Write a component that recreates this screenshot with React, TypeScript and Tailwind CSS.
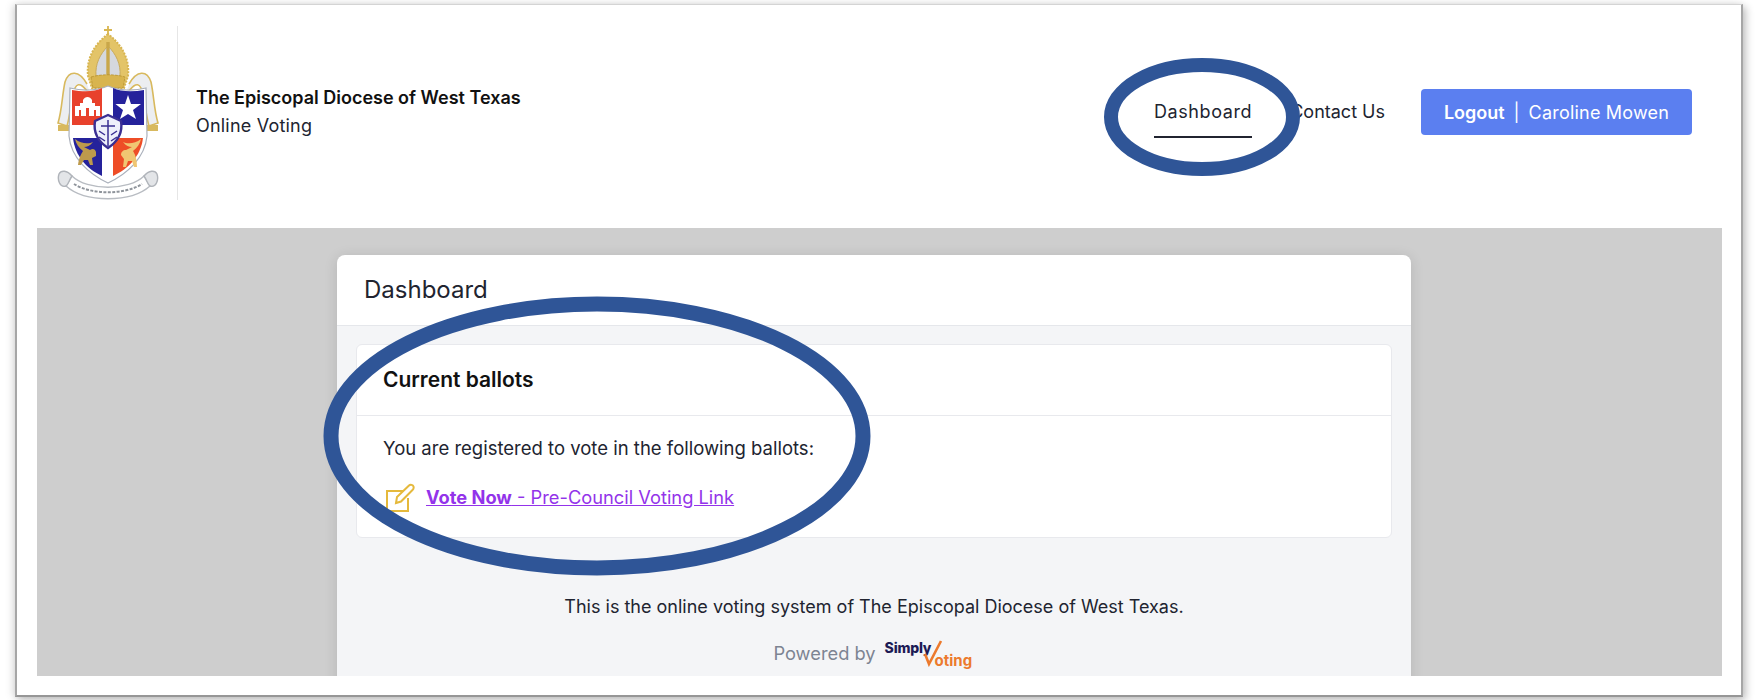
function Crest() {
  return (
    <svg width="102" height="174" viewBox="0 0 102 174" className="block">
      {/* lappets */}
      <path d="M30 58 C22 44 12 44 8 56 C5 70 5 84 1 97 L10 100 C13 90 14 74 18 62 C22 54 28 62 34 70" fill="#eceef1" stroke="#d8b95e" strokeWidth="1.6" />
      <path d="M72 58 C80 44 90 44 94 56 C97 70 97 84 101 97 L92 100 C89 90 88 74 84 62 C80 54 74 62 68 70" fill="#eceef1" stroke="#d8b95e" strokeWidth="1.6" />
      <path d="M1 99 h11 v6 h-11z M90 99 h11 v6 h-11z" fill="#d8b95e" />
      {/* mitre */}
      <path d="M51 0 v11 M47 4 h8" stroke="#d9b650" strokeWidth="1.8" />
      <path d="M51 8 C38 18 29 32 31 50 L35 62 H67 L71 50 C73 32 64 18 51 8Z" fill="#e3c468" stroke="#d8b550" strokeWidth="2" strokeDasharray="2 1.2" />
      <path d="M51 20 C43 28 38 38 39 50 H63 C64 38 59 28 51 20Z" fill="#d5d8de" stroke="#c9ab5c" />
      <path d="M51 16 V52" stroke="#c9a74a" strokeWidth="3.4" />
      <path d="M34 51 C45 48 57 48 68 51 L66 62 H36Z" fill="#d8b44e" stroke="#b8932f" strokeWidth="0.8" strokeDasharray="3 1" />
      {/* shield */}
      <path d="M13 62 C25 65 40 65 51 60 C62 65 77 65 89 62 L90 110 C88 132 70 148 51 157 C32 148 14 132 12 110Z" fill="#fff" stroke="#aab0bb" strokeWidth="1.2" />
      <path d="M15 64 C26 66 38 66 45 62 V99 H15Z" fill="#e8412c" />
      <path d="M56 62 C64 66 76 66 87 64 V99 H56Z" fill="#25229b" />
      <path d="M16 112 H45 V150 C30 143 18 130 16 112Z" fill="#25229b" />
      <path d="M56 112 H86 C84 130 71 143 56 150Z" fill="#ee4d27" />
      {/* alamo */}
      <path d="M18 90 V80 H23 V77 H26 V74 C28 70 33 70 35 74 V77 H38 V80 H43 V90Z" fill="#fff" />
      <path d="M22 84 h2 v6 h-2z M29 82 h3 v8 h-3z M37 84 h2 v6 h-2z" fill="#e8412c" />
      {/* star */}
      <path d="M71 69 L74 78 H84 L76 84 L79 93 L71 88 L63 93 L66 84 L58.5 78 H68Z" fill="#fff" />
      {/* winged lion */}
      <path d="M18 113 C24 118 32 118 36 116 C33 120 30 121 27 121 L33 124 C36 122 38 123 39 126 L39 130 L35 132 L36 139 H33 L31 134 H27 L24 139 H21 C22 132 24 128 26 125 C22 122 19 118 18 113Z" fill="#bd9a4c" />
      {/* winged ox */}
      <path d="M84 113 C78 118 70 118 66 116 C69 120 72 121 75 121 L69 124 C66 124 64 126 64 129 L67 133 L66 141 H69 L71 135 H75 L77 141 H80 C80 133 78 128 76 125 C80 122 83 118 84 113Z" fill="#f0c672" />
      {/* centre shield */}
      <path d="M51 89 L38 95 C36 107 42 116 51 122 C60 116 66 107 64 95Z" fill="#eef0fb" stroke="#3a2f93" strokeWidth="2.4" />
      <path d="M51 94 V120 M44 100 H58 M42 105 L48 109 M60 105 L54 109 M42 111 L48 115 M60 111 L54 115" stroke="#3a2f93" strokeWidth="1.5" fill="none" />
      {/* scroll */}
      <path d="M15 150 C30 165 72 165 87 150 L93 160 C74 177 28 177 9 160Z" fill="#fff" stroke="#b8bcc2" strokeWidth="1.4" />
      <path d="M15 150 C10 144 4 144 2 148 C0 154 3 162 9 160 C12 158 12 154 15 150Z M87 150 C92 144 98 144 100 148 C102 154 99 162 93 160 C90 158 90 154 87 150Z" fill="#e3e5e8" stroke="#b0b4ba" strokeWidth="1.4" />
      <path d="M17 158 C34 169 68 169 85 158" fill="none" stroke="#8f949b" strokeWidth="2" strokeDasharray="3 1.4" />
    </svg>
  );
}

function Ovals() {
  return (
    <svg width="1756" height="700" viewBox="0 0 1756 700" className="pointer-events-none absolute left-0 top-0">
      <ellipse cx="1202" cy="117" rx="91" ry="52" fill="none" stroke="#2f5597" strokeWidth="14" />
      <ellipse cx="597" cy="436" rx="266" ry="132" fill="none" stroke="#2f5597" strokeWidth="15" />
    </svg>
  );
}

function EditIcon() {
  return (
    <svg width="30" height="30" viewBox="0 0 30 30" fill="none" stroke="#e5b93c" strokeWidth="2" className="ml-[2px] shrink-0">
      <path d="M18 8 H2 V28 H23 V15" />
      <path d="M11 20 L12 14 L24 2.5 C25.5 1 28 2 28.5 3.5 C29 5 28.5 6 27.5 7 L16 18.5Z" />
    </svg>
  );
}

export default function App() {
  return (
    <div className="relative h-[700px] overflow-hidden bg-white pl-[15px] pr-[13px] pt-[4px] text-[#212430]" style={{ fontFamily: "Inter, 'Open Sans', sans-serif" }}>
      <div className="flex h-[693px] flex-col border-t border-l-2 border-r-2 border-b-2 border-t-[#d4d4d4] border-l-[#a6a6a6] border-r-[#a6a6a6] border-b-[#969696] bg-white pb-[19px] pl-[20px] pr-[19px] shadow-[3px_3px_8px_rgba(0,0,0,0.24),-3px_0_8px_rgba(0,0,0,0.1)]">
        <header className="flex h-[223px] shrink-0 items-start pr-[30px]">
          <div className="ml-[20px] mt-[21px] flex h-[174px]">
            <Crest />
            <div className="ml-[18px] h-[174px] w-px bg-[#e6e6e6]" />
            <div className="ml-[18px] flex flex-col justify-center pb-[2px]">
              <div className="text-[18px] font-semibold leading-[28px] text-[#111]">The Episcopal Diocese of West Texas</div>
              <div className="text-[18px] leading-[28px] tracking-[0.2px]">Online Voting</div>
            </div>
          </div>
          <nav className="ml-auto mt-[94px] flex items-start">
            <div className="border-b-2 border-[#212430] pb-[11px] text-[18px] leading-[26px] tracking-[0.6px]">Dashboard</div>
            <div className="ml-[38px] text-[18px] leading-[26px]">Contact Us</div>
            <div className="-mt-[10px] ml-[36px] flex h-[46px] w-[271px] items-center justify-center rounded-[4px] bg-[#5b7ff0] text-[18px] text-white">
              <span className="font-semibold">Logout</span>
              <span className="mx-[9px]">|</span>
              <span className="tracking-[0.2px]">Caroline Mowen</span>
            </div>
          </nav>
        </header>
        <main className="min-h-0 flex-1 overflow-hidden bg-[#cecece] pl-[300px] pt-[27px]">
          <div className="flex h-[460px] w-[1074px] flex-col rounded-t-[8px] bg-white shadow-[0_2px_14px_rgba(0,0,0,0.12)]">
            <div className="flex h-[71px] shrink-0 items-center border-b border-[#e5e7eb] pl-[27px] text-[24px] font-normal">Dashboard</div>
            <div className="flex-1 bg-[#f4f5f7] px-[19px] pt-[18px]">
              <div className="h-[194px] rounded-[6px] border border-[#e8e9ed] bg-white">
                <div className="flex h-[71px] items-center border-b border-[#e8e9ed] pl-[26px] text-[21px] font-semibold text-[#111]">Current ballots</div>
                <div className="pl-[26px] pt-[19px]">
                  <div className="text-[18.5px] leading-[26px]">You are registered to vote in the following ballots:</div>
                  <div className="mt-[22px] flex items-center">
                    <EditIcon />
                    <a href="#" className="ml-[11px] text-[18.3px] text-[#9333ea] underline"><span className="font-bold">Vote Now</span> - Pre-Council Voting Link</a>
                  </div>
                </div>
              </div>
              <div className="mt-[56px] text-center text-[18px] leading-[26px]">This is the online voting system of The Episcopal Diocese of West Texas.</div>
              <div className="mt-[19px] flex justify-center">
                <span className="mt-[1px] text-[18.3px] leading-[26px] text-[#7d8492]">Powered by</span>
                <div className="relative ml-[9px] h-[30px] w-[90px]">
                  <span className="absolute left-0 top-[-2px] text-[14px] font-extrabold tracking-[-0.2px] text-[#1d1b55]">Simply</span>
                  <span className="absolute left-[50px] top-[11px] text-[15px] font-bold text-[#ec7a2d]">oting</span>
                  <svg width="20" height="28" viewBox="0 0 20 28" className="absolute left-[38px] top-0">
                    <path d="M2 15 L6 25 L18 2" fill="none" stroke="#ec7a2d" strokeWidth="2.6" />
                  </svg>
                </div>
              </div>
            </div>
          </div>
        </main>
      </div>
      <Ovals />
    </div>
  );
}
